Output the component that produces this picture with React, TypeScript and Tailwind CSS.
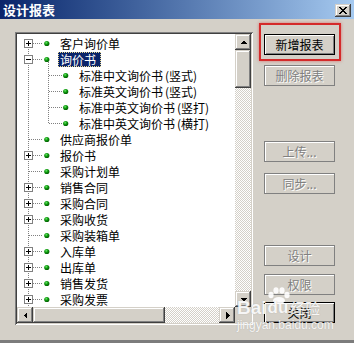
import React from "react";

type Row = { label: string; level: 0 | 1; box?: "+" | "-"; selected?: boolean };

const rows: Row[] = [
  { label: "客户询价单", level: 0, box: "+" },
  { label: "询价书", level: 0, box: "-", selected: true },
  { label: "标准中文询价书(竖式)", level: 1 },
  { label: "标准英文询价书(竖式)", level: 1 },
  { label: "标准中英文询价书(竖打)", level: 1 },
  { label: "标准中英文询价书(横打)", level: 1 },
  { label: "供应商报价单", level: 0 },
  { label: "报价书", level: 0, box: "+" },
  { label: "采购计划单", level: 0 },
  { label: "销售合同", level: 0, box: "+" },
  { label: "采购合同", level: 0, box: "+" },
  { label: "采购收货", level: 0, box: "+" },
  { label: "采购装箱单", level: 0 },
  { label: "入库单", level: 0, box: "+" },
  { label: "出库单", level: 0, box: "+" },
  { label: "销售发货", level: 0, box: "+" },
  { label: "采购发票", level: 0, box: "+" },
];

const raised =
  "bg-[#d4d0c8] shadow-[inset_-1px_-1px_#404040,inset_1px_1px_#d4d0c8,inset_-2px_-2px_#808080,inset_2px_2px_#ffffff]";

const checker =
  "bg-[repeating-conic-gradient(#d4d0c8_0_25%,#ffffff_0_50%)] bg-[length:2px_2px]";

function Arrow({ dir }: { dir: "up" | "down" | "left" | "right" }) {
  const pts = {
    up: "0,5 7,5 3.5,1.5",
    down: "0,2 7,2 3.5,5.5",
    left: "5,0 5,7 1.5,3.5",
    right: "2,0 2,7 5.5,3.5",
  }[dir];
  return (
    <div className={`flex h-[16px] w-[16px] shrink-0 items-center justify-center ${raised}`}>
      <svg width="7" height="7" viewBox="0 0 7 7" shapeRendering="crispEdges">
        <polygon points={pts} fill="#000" />
      </svg>
    </div>
  );
}

// splits "xxx(yy)" so the parens get SimSun-like half-width cells
function Label({ text }: { text: string }) {
  const m = text.match(/^(.*)\((.*)\)$/);
  if (!m) return <>{text}</>;
  return (
    <>
      {m[1]}
      <span className="inline-block w-[6px] text-right">(</span>
      {m[2]}
      <span className="inline-block w-[6px] text-left">)</span>
    </>
  );
}

function TreeLines() {
  const dot = { stroke: "#808080", strokeWidth: 1, strokeDasharray: "1 1" };
  return (
    <svg
      className="pointer-events-none absolute left-0 top-0"
      width="218"
      height="273"
      shapeRendering="crispEdges"
    >
      <defs>
        <radialGradient id="g" cx="40%" cy="35%" r="65%">
          <stop offset="0%" stopColor="#6ee86e" />
          <stop offset="45%" stopColor="#10a010" />
          <stop offset="100%" stopColor="#005a00" />
        </radialGradient>
      </defs>
      <line x1="11.5" y1="13" x2="11.5" y2="273" {...dot} />
      <line x1="31.5" y1="28" x2="31.5" y2="90" {...dot} />
      {rows.map((r, i) => {
        const cy = 9 + 16 * i;
        if (r.level === 1) {
          return (
            <g key={i}>
              <line x1="32" y1={cy + 0.5} x2="45" y2={cy + 0.5} {...dot} />
              <circle cx="48.7" cy={cy + 0.5} r="2.6" fill="url(#g)" shapeRendering="auto" />
            </g>
          );
        }
        return (
          <g key={i}>
            <line x1={r.box ? 16 : 12} y1={cy + 0.5} x2="25" y2={cy + 0.5} {...dot} />
            {r.box && (
              <>
                <rect x="7.5" y={cy - 3.5} width="8" height="8" fill="#fff" stroke="#808080" />
                <line x1="9" y1={cy + 0.5} x2="14" y2={cy + 0.5} stroke="#000" />
                {r.box === "+" && <line x1="11.5" y1={cy - 2} x2="11.5" y2={cy + 3} stroke="#000" />}
              </>
            )}
            <circle cx="29.8" cy={cy + 0.5} r="2.6" fill="url(#g)" shapeRendering="auto" />
          </g>
        );
      })}
    </svg>
  );
}

function DlgButton({
  label,
  kind,
  className = "",
}: {
  label: string;
  kind: "default" | "disabled";
  className?: string;
}) {
  const look =
    kind === "default"
      ? "border border-black text-black shadow-[inset_1px_1px_#ffffff,inset_-1px_-1px_#808080]"
      : "border border-[#808080] text-[#808080] shadow-[inset_1px_1px_#ffffff] [text-shadow:1px_1px_0_#ffffff]";
  return (
    <div
      className={`flex h-[21px] w-[71px] items-center justify-center bg-[#d4d0c8] text-[12px] leading-none ${look} ${className}`}
    >
      {label}
    </div>
  );
}

export default function App() {
  return (
    <div className="relative flex h-[343px] w-[354px] flex-col overflow-hidden bg-[#d4d0c8] font-['Noto_Sans_CJK_SC',sans-serif]">
      <div className="flex h-[19px] shrink-0 items-start justify-between bg-gradient-to-r from-[#0a246a] to-[#a6caf0] pl-[3px] pr-[3px]">
        <span className="mt-[2px] text-[13px] font-bold leading-[15px] text-white">设计报表</span>
        <div className={`mt-[4px] flex h-[13px] w-[16px] items-center justify-center ${raised}`}>
          <svg width="8" height="7" viewBox="0 0 8 7" shapeRendering="crispEdges">
            <path d="M0 0h2v1h-2zM6 0h2v1h-2zM1 1h2v1h-2zM5 1h2v1h-2zM2 2h4v1h-4zM3 3h2v1h-2zM2 4h4v1h-4zM1 5h2v1h-2zM5 5h2v1h-2zM0 6h2v1h-2zM6 6h2v1h-2z" fill="#000" />
          </svg>
        </div>
      </div>

      <div className="flex flex-1 pl-[15px] pt-[13px]">
        <div className="flex h-[293px] w-[238px] shrink-0 flex-col bg-white p-[2px] shadow-[inset_1px_1px_#808080,inset_-1px_-1px_#ffffff,inset_2px_2px_#404040,inset_-2px_-2px_#d4d0c8]">
          <div className="flex h-[273px]">
            <div className="relative h-[273px] w-[218px] overflow-hidden bg-white pt-[1px] text-[12px] text-black">
              <TreeLines />
              {rows.map((r, i) => (
                <div
                  key={i}
                  className={`flex h-[16px] items-center whitespace-nowrap ${r.level === 0 ? "pl-[41px]" : "pl-[60px]"}`}
                >
                  <span
                    className={`h-[15px] pl-[2px] pr-[5px] leading-[15px] ${
                      r.selected
                        ? "bg-[#0a246a] text-white outline-1 -outline-offset-1 outline-dotted outline-[#e8d890]"
                        : ""
                    }`}
                  >
                    <Label text={r.label} />
                  </span>
                </div>
              ))}
            </div>
            <div className="flex w-[16px] flex-col">
              <Arrow dir="up" />
              <div className={`h-[38px] w-[16px] ${raised}`} />
              <div className={`flex-1 ${checker}`} />
              <Arrow dir="down" />
            </div>
          </div>
          <div className="flex h-[16px]">
            <Arrow dir="left" />
            <div className={`h-[16px] w-[132px] ${raised}`} />
            <div className={`flex-1 ${checker}`} />
            <Arrow dir="right" />
            <div className="h-[16px] w-[16px] bg-[#d4d0c8]" />
          </div>
        </div>

        <div className="ml-[11px] flex w-[71px] flex-col pt-[2px]">
          <DlgButton label="新增报表" kind="default" />
          <DlgButton label="删除报表" kind="disabled" className="mt-[10px]" />
          <DlgButton label="上传..." kind="disabled" className="mt-[55px]" />
          <DlgButton label="同步..." kind="disabled" className="mt-[11px]" />
          <DlgButton label="设计" kind="disabled" className="mt-[51px]" />
          <DlgButton label="权限" kind="disabled" className="mt-[8px]" />
          <DlgButton label="关闭" kind="default" className="mt-[7px]" />
        </div>
      </div>

      <div className="h-[3px] shrink-0 bg-[#7c7c7c]" />

      {/* annotation around the first button */}
      <div className="pointer-events-none absolute left-[259px] top-[23px] h-[38px] w-[82px] border-2 border-[#d42a2a] shadow-[0_0_3px_rgba(220,40,40,0.55)]" />

      {/* watermark */}
      <div className="pointer-events-none absolute left-[237px] top-[286px] text-white/90 [text-shadow:0_0_1px_rgba(120,120,120,0.5)]">
        <svg className="absolute left-[30px] top-[1px]" width="23" height="17" viewBox="0 0 23 17">
          <ellipse cx="4" cy="8" rx="2.6" ry="3.2" fill="currentColor" />
          <ellipse cx="9" cy="3.5" rx="2.6" ry="3.2" fill="currentColor" />
          <ellipse cx="15" cy="3.5" rx="2.6" ry="3.2" fill="currentColor" />
          <ellipse cx="20" cy="8" rx="2.6" ry="3.2" fill="currentColor" />
          <ellipse cx="12" cy="13.5" rx="6" ry="3.5" fill="currentColor" />
        </svg>
        <div className="absolute left-0 top-[13px] flex items-end whitespace-nowrap font-['Liberation_Sans',sans-serif] font-bold">
          <span className="text-[19px] leading-[18px]">Bai</span>
          <span className="ml-[1px] text-[17px] leading-[18px]">du</span>
          <span className="ml-[2px] font-['Noto_Sans_CJK_SC',sans-serif] text-[15px] font-normal leading-[18px]">经验</span>
        </div>
        <div className="absolute left-0 top-[33px] whitespace-nowrap font-['Liberation_Sans',sans-serif] text-[12px] leading-[12px]">
          jingyan.baidu.com
        </div>
      </div>
    </div>
  );
}
